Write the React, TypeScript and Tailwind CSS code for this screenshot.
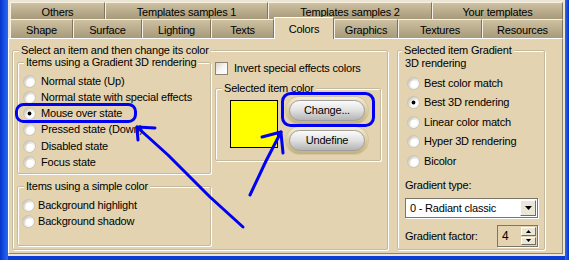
import React from "react";

const PANEL = "bg-[#e3d3b0]";

const Radio = ({ checked = false }: { checked?: boolean }) => (
  <svg width="13" height="13" viewBox="0 0 13 13" className="shrink-0 block">
    <defs>
      <linearGradient id="rb" x1="0" y1="0" x2="1" y2="1">
        <stop offset="0" stopColor="#bdb8ab" />
        <stop offset="0.55" stopColor="#f2f1ec" />
        <stop offset="1" stopColor="#ffffff" />
      </linearGradient>
    </defs>
    <circle cx="6.5" cy="6.5" r="6" fill="url(#rb)" stroke="#c8c3b6" strokeWidth="1" />
    <circle cx="7" cy="7" r="3.6" fill="#ffffff" />
    {checked && <circle cx="6.5" cy="6.5" r="1.9" fill="#000" />}
  </svg>
);

const Group = ({
  title,
  className,
  legendClass = "ml-[6px]",
  children,
}: {
  title: string;
  className: string;
  legendClass?: string;
  children?: React.ReactNode;
}) => (
  <fieldset
    className={`border border-[#c3baa3] rounded-[2px] shadow-[inset_1px_1px_0_#fff,1px_1px_0_#fff] ${className}`}
  >
    <legend className={`${legendClass} px-[2px] leading-[12px] ${PANEL}`}>{title}</legend>
    {children}
  </fieldset>
);

const XPButton = ({ label, h }: { label: string; h: string }) => (
  <div
    className={`w-[82px] ${h} rounded-full p-[3px] bg-linear-to-b from-[#f4ecd6] via-[#dccb9f] to-[#c4af7f] shadow-[0_0_0_1px_#d3c6a2]`}
  >
    <div className="w-full h-full rounded-full border border-[#9f9f9f] bg-linear-to-b from-[#fbfbfb] via-[#e0e0e0] to-[#b5b5b5] flex items-center justify-center text-black">
      {label}
    </div>
  </div>
);

const row1 = [
  { label: "Others", w: "w-[95px]" },
  { label: "Templates samples 1", w: "w-[163px]" },
  { label: "Templates samples 2", w: "w-[164px]" },
  { label: "Your templates", w: "w-[131px]" },
];

const row2 = [
  { label: "Shape", w: "w-[63px]" },
  { label: "Surface", w: "w-[69px]" },
  { label: "Lighting", w: "w-[69px]" },
  { label: "Texts", w: "w-[63px]" },
  { label: "Colors", w: "w-[60px]", sel: true },
  { label: "Graphics", w: "w-[64px]" },
  { label: "Textures", w: "w-[84px]" },
  { label: "Resources", w: "w-[81px]" },
];

const Tab = ({ label, w }: { label: string; w: string }) => (
  <div
    className={`${w} h-full pt-[2px] flex items-center justify-center border-t border-l border-r border-t-[#f6f1e4] border-l-[#f6f1e4] border-r-[#7f755e] bg-linear-to-b from-[#cdc1a1] to-[#a79a7b] text-black`}
  >
    {label}
  </div>
);

const gradient3D = [
  { label: "Normal state (Up)" },
  { label: "Normal state with special effects" },
  { label: "Mouse over state", checked: true },
  { label: "Pressed state (Down)" },
  { label: "Disabled state" },
  { label: "Focus state" },
];

const rendering = [
  { label: "Best color match" },
  { label: "Best 3D rendering", checked: true },
  { label: "Linear color match" },
  { label: "Hyper 3D rendering" },
  { label: "Bicolor" },
];

export default function App() {
  return (
    <div className="relative w-[569px] h-[260px] flex bg-[#0b3dd6] font-['Liberation_Sans',Arial,sans-serif] text-[11px] tracking-[-0.2px] text-black leading-none overflow-hidden">
      <div className="w-[8px] h-full bg-linear-to-r from-[#0831c9] via-[#1450e3] to-[#2b66ee]" />
      <div className="w-[557px] h-[256px] bg-[#ece5d2] pt-[2px] flex flex-col">
        {/* tab rows */}
        <div className="pl-[2px] h-[17px] flex">
          {row1.map((t) => (
            <Tab key={t.label} label={t.label} w={t.w} />
          ))}
        </div>
        <div className="pl-[2px] h-[19px] flex">
          {row2.map((t) =>
            t.sel ? (
              <div
                key={t.label}
                className={`${t.w} relative z-10 self-start h-[22px] -mt-[2px] pt-[1px] flex items-center justify-center border-t border-l border-r border-t-white border-l-white border-r-[#7f755e] ${PANEL}`}
              >
                {t.label}
              </div>
            ) : (
              <Tab key={t.label} label={t.label} w={t.w} />
            )
          )}
        </div>
        {/* panel */}
        <div
          className={`relative w-[555px] h-[216px] border-t border-l border-r border-b border-t-white border-l-white border-r-[#8d8571] border-b-[#8d8571] ${PANEL} pt-[5px] pl-[3px] flex items-start`}
        >
          <Group title="Select an item and then change its color" className="w-[376px] h-[206px]">
            <div className="flex pl-[4px]">
              <div className="w-[194px] flex flex-col gap-[6px]">
                <Group title="Items using a Gradient 3D rendering" className="w-[194px] h-[118px]">
                  <div className="pt-[5px] pl-[5px] flex flex-col">
                    {gradient3D.map((r) => (
                      <div key={r.label} className="h-[16.25px] flex items-center gap-[5px]">
                        <Radio checked={r.checked} />
                        <span>{r.label}</span>
                      </div>
                    ))}
                  </div>
                </Group>
                <Group title="Items using a simple color" className="w-[194px] h-[66px]">
                  <div className="pt-[5px] pl-[4px] flex flex-col">
                    {["Background highlight", "Background shadow"].map((l) => (
                      <div key={l} className="h-[16.5px] flex items-center gap-[3px]">
                        <Radio />
                        <span>{l}</span>
                      </div>
                    ))}
                  </div>
                </Group>
              </div>
              <div className="ml-[4px] w-[166px] flex flex-col">
                <div className="mt-[6px] h-[13px] flex items-center gap-[6px]">
                  <div className="w-[13px] h-[13px] border border-[#8a8577] bg-linear-to-br from-[#d9d5ca] via-[#f7f6f2] to-white" />
                  <span>Invert special effects colors</span>
                </div>
                <Group title="Selected item color" className="mt-[7px] w-[166px] h-[79px]">
                  <div className="flex items-start pt-[3px] pl-[14px]">
                    <div className="mt-[3px] w-[48px] h-[48px] bg-[#ffff00] border border-black" />
                    <div className="ml-[8px] flex flex-col gap-[3px]">
                      <XPButton label="Change..." h="h-[27px]" />
                      <XPButton label="Undefine" h="h-[27px]" />
                    </div>
                  </div>
                </Group>
              </div>
            </div>
          </Group>

          <Group title="Selected item Gradient" legendClass="ml-[4px]" className="ml-[9px] w-[148px] h-[206px]">
            <div className="pl-[7px] flex flex-col">
              <div className="leading-[14px] h-[14px]">3D rendering</div>
              <div className="mt-[3.5px] pl-[2px] flex flex-col">
                {rendering.map((r) => (
                  <div key={r.label} className="h-[19.5px] flex items-center gap-[4px]">
                    <Radio checked={r.checked} />
                    <span>{r.label}</span>
                  </div>
                ))}
              </div>
              <div className="mt-[7px] leading-[14px] h-[14px]">Gradient type:</div>
              <div className="mt-[6px] w-[133px] h-[20px] bg-white border border-[#7b7668] shadow-[1px_1px_0_#fff] flex items-center">
                <span className="pl-[4px] flex-1">0 - Radiant classic</span>
                <div className="w-[16px] h-[16px] mr-[1px] bg-[#ebe7d8] border border-t-white border-l-white border-r-[#716f64] border-b-[#716f64] flex items-center justify-center">
                  <svg width="7" height="4" viewBox="0 0 7 4">
                    <path d="M0 0h7L3.5 4z" fill="#000" />
                  </svg>
                </div>
              </div>
              <div className="mt-[7px] w-[133px] h-[22px] flex items-center justify-between">
                <span>Gradient factor:</span>
                <div className="w-[41px] h-[22px] border border-[#7b7668] shadow-[1px_1px_0_#fff] flex items-center">
                  <span className="pl-[4px] flex-1 text-[12px]">4</span>
                  <div className="w-[15px] h-[18px] mr-[1px] flex flex-col gap-[1px]">
                    <div className="h-[9px] bg-[#ebe7d8] border border-t-white border-l-white border-r-[#716f64] border-b-[#716f64] flex items-center justify-center">
                      <svg width="5" height="3" viewBox="0 0 5 3">
                        <path d="M0 3h5L2.5 0z" fill="#000" />
                      </svg>
                    </div>
                    <div className="h-[9px] bg-[#ebe7d8] border border-t-white border-l-white border-r-[#716f64] border-b-[#716f64] flex items-center justify-center">
                      <svg width="5" height="3" viewBox="0 0 5 3">
                        <path d="M0 0h5L2.5 3z" fill="#000" />
                      </svg>
                    </div>
                  </div>
                </div>
              </div>
            </div>
          </Group>
        </div>
      </div>
      <div className="w-[4px] h-full bg-linear-to-r from-[#2b66ee] to-[#0831c9]" />

      {/* hand-drawn blue annotations */}
      <svg
        className="absolute inset-0 pointer-events-none z-20"
        width="569"
        height="260"
        viewBox="0 0 569 260"
        fill="none"
        stroke="#0000f2"
        strokeWidth="3"
        strokeLinecap="round"
        strokeLinejoin="round"
      >
        <rect x="16.5" y="104.5" width="119" height="17" rx="7" />
        <rect x="282.5" y="93.5" width="91" height="32" rx="8" />
        <path d="M243 227 L210 197 L168 155 L137 127" />
        <path d="M137 127 L155 128 M137 129 L138 140" />
        <path d="M250 195 L266 161 L281 132" />
        <path d="M281 132 L262 137 M281 133 L283 153" />
      </svg>
    </div>
  );
}
